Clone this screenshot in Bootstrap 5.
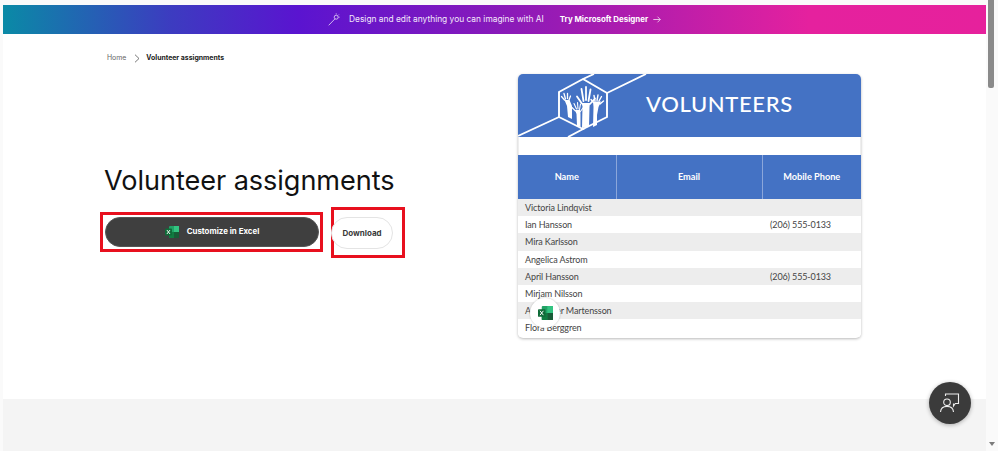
<!DOCTYPE html>
<html lang="en">
<head>
<meta charset="utf-8">
<title>Volunteer assignments</title>
<link href="https://cdn.jsdelivr.net/npm/bootstrap@5.3.0/dist/css/bootstrap.min.css" rel="stylesheet">
<style>
html,body{height:451px;overflow:hidden;background:#fafafa;font-family:"Inter","Liberation Sans",sans-serif}
.shell{height:451px;padding-left:3px}
.main-col{width:983px;height:451px;background:#fff}
.top-strip{height:5px;background:#fafafa}
.promo{height:29px;background:linear-gradient(90deg,#0a8aa6 0%,#3c3cc0 17%,#5a14d0 30%,#8c1ab8 52%,#e5219e 82%,#e6219c 100%);color:#f3e9fb;font-size:8.4px;padding-left:325px}
.promo strong{font-weight:700;color:#fff;font-size:7.9px;margin-left:16px;margin-right:5px}
.promo svg.wand{margin-right:9px}
.crumbs{margin:0;padding:8px 0 0 104px;font-size:6.9px;height:40px;align-items:center}
.crumbs a{color:#666;text-decoration:none}
.crumbs .here{color:#1a1a1a;font-weight:700}
.crumbs svg{margin:0 6px 0 8px}
.hero{padding-left:97px}
.hero-text{width:418px;padding-top:88px}
.hero-text h1{font-size:27.1px;font-weight:400;color:#111;margin:0 0 12px 4px;line-height:38px;letter-spacing:-.05px;white-space:nowrap}
.mark-box{border:3px solid #e8101e;height:40px;width:223px;padding:0 0 0 2px;display:flex;align-items:center;flex:none}
.mark-box.alt{width:74px;height:51px;margin-left:8px;padding:0;margin-top:-5px}
.go-excel{background:#3f3f3f;color:#fff;width:214px;height:30px;font-size:7.9px;font-weight:700;border:1px solid #555;padding:0;flex:none}
.go-excel:hover{background:#3f3f3f;color:#fff}
.go-down{background:#fff;color:#3a3a3a;width:62px;height:32px;font-size:8px;font-weight:700;border:1px solid #e4e4e4;padding:0;margin-left:-3px;flex:none}
.sheet{width:343px;height:264px;border-radius:5px;overflow:hidden;background:#fff;box-shadow:0 1px 3px rgba(0,0,0,.28);font-family:"Lato","Liberation Sans",sans-serif;border:0}
.sheet-head{height:63px;background:#4472c4;color:#fff;font-size:22px;font-weight:500;letter-spacing:.65px;padding-left:128px;padding-bottom:4px;position:relative}
.sheet-head svg{position:absolute;left:0;top:0}
.gap-row{height:18px;background:#fff;border-left:1px solid #eee;border-right:1px solid #eee}
.sheet table{width:343px;table-layout:fixed;margin:0;font-size:9px;letter-spacing:-.12px;color:#444}
.sheet th{background:#4472c4!important;color:#fff!important;height:44px;text-align:center;vertical-align:middle;font-weight:700;border:0;border-right:1px solid #8ba6da;padding:0;font-size:9.2px;letter-spacing:0}
.sheet th:last-child{border-right:0}
.sheet td{height:17.2px;padding:0 0 0 7px;border:0;vertical-align:middle;line-height:1;color:#444;box-shadow:none}
.sheet td:last-child{padding-left:8px}
.sheet tbody tr:nth-child(odd) td{background:#ededed}
.sheet tbody tr:nth-child(even) td{background:#fff}
.foot-band{height:52px;background:#f4f4f4}
.scroll-rail{width:12px;height:451px;background:#fafafa;position:absolute;left:986px;top:0}
.scroll-thumb{width:6px;height:88px;background:#8a8a8a;margin-left:2px;border-radius:0 0 2px 2px}
.scroll-down{position:absolute;left:2.5px;bottom:5px;width:0;height:0;border-left:3px solid transparent;border-right:3px solid transparent;border-top:4px solid #7c7c7c}
.float-badge{position:absolute;left:530px;top:298px;width:30px;height:30px;border-radius:50%;background:#fff;box-shadow:0 0 2px rgba(0,0,0,.25)}
.float-chat{position:absolute;left:929px;top:382px;width:42px;height:42px;border-radius:50%;background:#3b3b3b;box-shadow:0 1px 4px rgba(0,0,0,.3)}
</style>
</head>
<body>
<div class="shell position-relative">
  <div class="main-col d-flex flex-column">
    <div class="top-strip"></div>
    <div class="promo d-flex align-items-center">
      <svg class="wand" width="12" height="13" viewBox="0 0 12 13" fill="none" stroke="#e9dcf8" stroke-width=".8"><path d="M.7 12.3 7 5.800"/><circle cx="8.200" cy="4.200" r="2"/><path d="M8.200.4v1M11.600 4.200h-1M10.800 1.600l-.7.7"/></svg>
      <span>Design and edit anything you can imagine with AI</span>
      <strong>Try Microsoft Designer</strong>
      <svg width="8" height="7" viewBox="0 0 8 7" fill="none" stroke="#f4e4f6" stroke-width=".8"><path d="M.3 3.500h7M4.500.7l2.800 2.800-2.800 2.800"/></svg>
    </div>
    <nav class="crumbs d-flex">
      <a href="#">Home</a>
      <svg width="6" height="9" viewBox="0 0 6 9" fill="none" stroke="#555" stroke-width=".8"><path d="M1 .7 5 4.500 1 8.300"/></svg>
      <span class="here">Volunteer assignments</span>
    </nav>
    <div class="hero d-flex flex-grow-1">
      <div class="hero-text">
        <h1>Volunteer assignments</h1>
        <div class="d-flex align-items-start">
          <div class="mark-box">
            <a href="#" class="btn go-excel rounded-pill d-flex align-items-center justify-content-center gap-2">
              <svg width="14" height="12" viewBox="0 0 14 12"><rect x="4" y="0" width="10" height="12" rx="1" fill="#21a366"/><rect x="9" y="0" width="5" height="6" fill="#33c481"/><rect x="4" y="6" width="5" height="6" fill="#107c41"/><rect x="9" y="6" width="5" height="6" fill="#185c37"/><rect x="0" y="2.500" width="7" height="7" rx=".8" fill="#0f6b38"/><path d="M1.900 4 5 8M5 4 1.900 8" stroke="#fff" stroke-width=".9"/></svg>
              <span>Customize in Excel</span>
            </a>
          </div>
          <div class="mark-box alt">
            <a href="#" class="btn go-down rounded-pill d-flex align-items-center justify-content-center">Download</a>
          </div>
        </div>
      </div>
      <div class="sheet card">
        <div class="sheet-head d-flex align-items-center">
          <svg width="130" height="63" viewBox="0 0 130 63" fill="none">
            <g stroke="#fff" stroke-width="1.900">
              <path d="M65 5 89 19V43L65 55 41 43V18Z"/>
              <path d="M0 62 41 43M89 19 128 0M65 5 76 0M50 63 67 54"/>
            </g>
            <g fill="#fff">
              <path d="M64 54 64.500 32 63 29H72L71.500 33 71 53Z"/>
              <path d="M49 32 46.500 26H51.500L54 32 54 45 50 43Z"/>
              <path d="M58.500 40 57 36H62L62.500 40 62.500 53 59 52Z"/>
              <path d="M75.500 33 75 27.500H83L80.500 33 79 41 79 51 75 53Z"/>
            </g>
            <g stroke="#fff" stroke-linecap="round">
              <path d="M63.500 29 59 22.500M65.500 27 63.500 15M68 26 68 13M70.500 27 72.500 15.500M72 30 77 24.500" stroke-width="1.800"/>
              <path d="M46.500 26 43.500 22.500M47.500 25 46 19.500M49.500 24.500 49.500 19.500M51 26 52.500 22" stroke-width="1.300"/>
              <path d="M57.500 37 54 33.500M58.500 35 56 29.500M60 35 59.500 28.500M61.500 35.500 62.500 30M62 38 65 34" stroke-width="1.100"/>
              <path d="M75.500 28.500 73 25.500M77 27 76 21.500M79 26.500 80 21M81 27 83.500 22.500M82 30 85.500 27" stroke-width="1.400"/>
            </g>
          </svg>
          <span>VOLUNTEERS</span>
        </div>
        <div class="gap-row"></div>
        <table class="table">
          <colgroup><col style="width:98px"><col style="width:146px"><col style="width:99px"></colgroup>
          <thead><tr><th>Name</th><th>Email</th><th>Mobile Phone</th></tr></thead>
          <tbody>
            <tr><td>Victoria Lindqvist</td><td></td><td></td></tr>
            <tr><td>Ian Hansson</td><td></td><td>(206) 555-0133</td></tr>
            <tr><td>Mira Karlsson</td><td></td><td></td></tr>
            <tr><td>Angelica Astrom</td><td></td><td></td></tr>
            <tr><td>April Hansson</td><td></td><td>(206) 555-0133</td></tr>
            <tr><td>Mirjam Nilsson</td><td></td><td></td></tr>
            <tr><td class="text-nowrap">Alexander Martensson</td><td></td><td></td></tr>
            <tr><td>Flora Berggren</td><td></td><td></td></tr>
          </tbody>
        </table>
      </div>
    </div>
    <div class="foot-band"></div>
  </div>
  <div class="scroll-rail"><div class="scroll-thumb"></div><div class="scroll-down"></div></div>
  <div class="float-badge d-flex align-items-center justify-content-center">
    <svg width="15" height="14" viewBox="0 0 14 13"><rect x="3.500" y="0" width="10.500" height="13" rx="1" fill="#21a366"/><rect x="8.700" y="0" width="5.300" height="6.500" fill="#33c481"/><rect x="3.500" y="6.500" width="5.200" height="6.500" fill="#107c41"/><rect x="8.700" y="6.500" width="5.300" height="6.500" fill="#185c37"/><rect x="0" y="3" width="7" height="7" rx=".8" fill="#0f6b38"/><path d="M1.900 4.500 5 8.500M5 4.500 1.900 8.500" stroke="#fff" stroke-width=".9"/></svg>
  </div>
  <div class="float-chat d-flex align-items-center justify-content-center">
    <svg width="22" height="22" viewBox="0 0 22 22" fill="none" stroke="#eee" stroke-width="1.100"><path d="M6.500 4V2h13v9.500h-3.200L14.500 14v-2.500"/><circle cx="8" cy="10.300" r="3.300" fill="#3b3b3b"/><path d="M1.500 20c.3-3.600 2.800-5.600 6.500-5.600s6.200 2 6.500 5.600"/></svg>
  </div>
</div>
<script src="https://cdn.jsdelivr.net/npm/bootstrap@5.3.0/dist/js/bootstrap.bundle.min.js"></script>
</body>
</html>
